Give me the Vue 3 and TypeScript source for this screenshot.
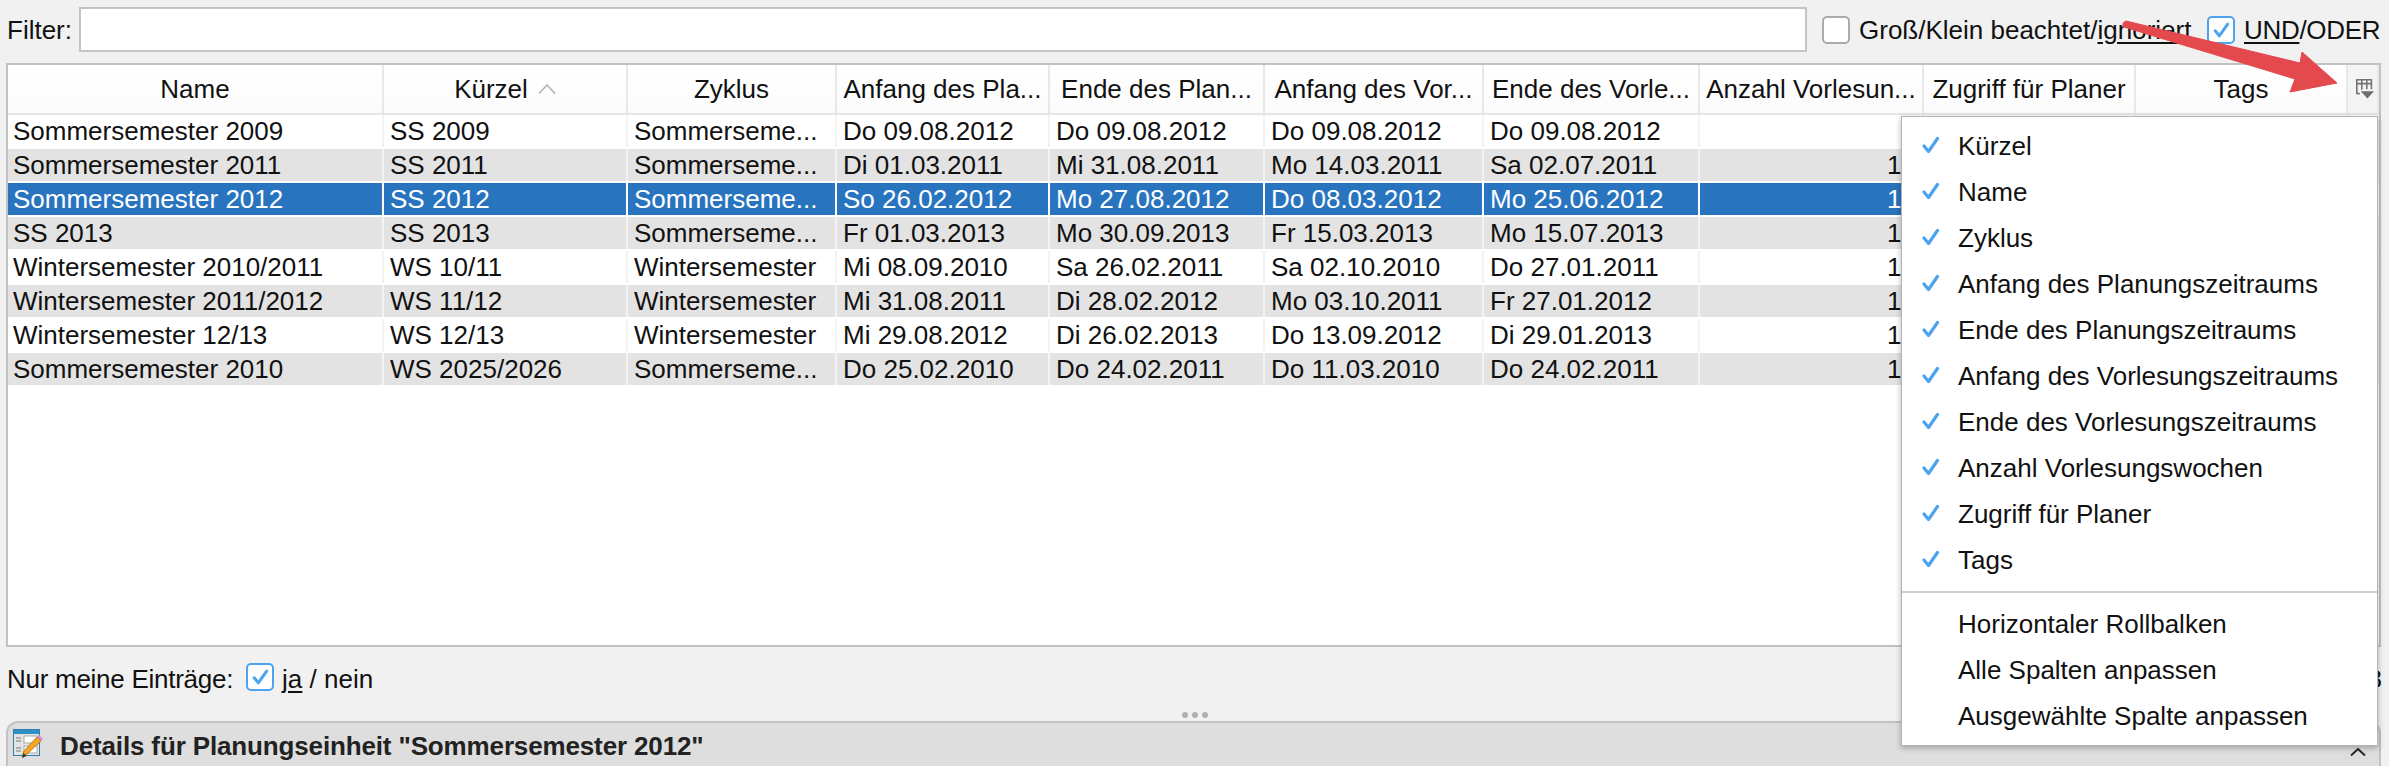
<script setup lang="ts">
interface Row { name: string; short: string; cycle: string; a: string; b: string; c: string; d: string; weeks: string }

const headers: string[] = ['Name', 'Kürzel', 'Zyklus', 'Anfang des Pla...', 'Ende des Plan...', 'Anfang des Vor...', 'Ende des Vorle...', 'Anzahl Vorlesun...', 'Zugriff für Planer', 'Tags']

const rows: Row[] = [
  { name: 'Sommersemester 2009', short: 'SS 2009', cycle: 'Sommerseme...', a: 'Do 09.08.2012', b: 'Do 09.08.2012', c: 'Do 09.08.2012', d: 'Do 09.08.2012', weeks: '' },
  { name: 'Sommersemester 2011', short: 'SS 2011', cycle: 'Sommerseme...', a: 'Di 01.03.2011', b: 'Mi 31.08.2011', c: 'Mo 14.03.2011', d: 'Sa 02.07.2011', weeks: '15' },
  { name: 'Sommersemester 2012', short: 'SS 2012', cycle: 'Sommerseme...', a: 'So 26.02.2012', b: 'Mo 27.08.2012', c: 'Do 08.03.2012', d: 'Mo 25.06.2012', weeks: '15' },
  { name: 'SS 2013', short: 'SS 2013', cycle: 'Sommerseme...', a: 'Fr 01.03.2013', b: 'Mo 30.09.2013', c: 'Fr 15.03.2013', d: 'Mo 15.07.2013', weeks: '15' },
  { name: 'Wintersemester 2010/2011', short: 'WS 10/11', cycle: 'Wintersemester', a: 'Mi 08.09.2010', b: 'Sa 26.02.2011', c: 'Sa 02.10.2010', d: 'Do 27.01.2011', weeks: '15' },
  { name: 'Wintersemester 2011/2012', short: 'WS 11/12', cycle: 'Wintersemester', a: 'Mi 31.08.2011', b: 'Di 28.02.2012', c: 'Mo 03.10.2011', d: 'Fr 27.01.2012', weeks: '15' },
  { name: 'Wintersemester 12/13', short: 'WS 12/13', cycle: 'Wintersemester', a: 'Mi 29.08.2012', b: 'Di 26.02.2013', c: 'Do 13.09.2012', d: 'Di 29.01.2013', weeks: '15' },
  { name: 'Sommersemester 2010', short: 'WS 2025/2026', cycle: 'Sommerseme...', a: 'Do 25.02.2010', b: 'Do 24.02.2011', c: 'Do 11.03.2010', d: 'Do 24.02.2011', weeks: '15' },
]

const columns: string[] = ['Kürzel', 'Name', 'Zyklus', 'Anfang des Planungszeitraums', 'Ende des Planungszeitraums', 'Anfang des Vorlesungszeitraums', 'Ende des Vorlesungszeitraums', 'Anzahl Vorlesungswochen', 'Zugriff für Planer', 'Tags']
const actions: string[] = ['Horizontaler Rollbalken', 'Alle Spalten anpassen', 'Ausgewählte Spalte anpassen']

function rowClass(i: number): string {
  if (i === 2) return 'row selected'
  return i % 2 === 1 ? 'row alt' : 'row'
}
</script>

<template>
  <div class="page">
    <div class="filter-bar">
      <span class="filter-label">Filter:</span>
      <div class="filter-input"></div>
      <div class="box"></div>
      <span class="opt-a">Groß/Klein beachtet/<u>ignoriert</u></span>
      <div class="box on">
        <svg viewBox="0 0 24 24" width="20" height="20"><path d="M5 13l5 6L20 5" fill="none" stroke="#4da3ee" stroke-width="3.6" stroke-linecap="round" stroke-linejoin="round" /></svg>
      </div>
      <span class="opt-b"><u>UND</u>/ODER</span>
    </div>

    <div class="frame">
      <div class="grid head">
        <div v-for="h in headers" :key="h" class="hcell">
          <span>{{ h }}</span>
          <svg v-if="h === 'Kürzel'" class="sort" viewBox="0 0 18 10" width="18" height="10"><path d="M1 9.5L9 1l8 8.5" fill="none" stroke="#b4b4b4" stroke-width="1.6" /></svg>
        </div>
        <div class="hcell corner">
          <svg viewBox="0 0 18 20" width="18" height="20">
            <path d="M0.8 15V0.8h14.6v9.5M0.8 4.6h14.6M5.8 0.8v10M10.8 0.8v9.5M0.8 14.6h3" fill="none" stroke="#747474" stroke-width="1.6" />
            <path d="M4.7 12.2H18l-6.6 7.4z" fill="#6e6e6e" />
          </svg>
        </div>
      </div>
      <div class="body">
        <div v-for="(r, i) in rows" :key="r.name" class="grid" :class="rowClass(i)">
          <div class="cell first">{{ r.name }}</div>
          <div class="cell">{{ r.short }}</div>
          <div class="cell">{{ r.cycle }}</div>
          <div class="cell">{{ r.a }}</div>
          <div class="cell">{{ r.b }}</div>
          <div class="cell">{{ r.c }}</div>
          <div class="cell">{{ r.d }}</div>
          <div class="cell num">{{ r.weeks }}</div>
          <div class="cell"></div>
          <div class="cell"></div>
          <div class="cell"></div>
        </div>
      </div>
    </div>

    <div class="mine">
      <span class="mine-label">Nur meine Einträge:</span>
      <div class="box on">
        <svg viewBox="0 0 24 24" width="20" height="20"><path d="M5 13l5 6L20 5" fill="none" stroke="#4da3ee" stroke-width="3.6" stroke-linecap="round" stroke-linejoin="round" /></svg>
      </div>
      <span class="yes"><u>ja</u> / nein</span>
      <span class="count">8</span>
    </div>

    <div class="grip"><i></i><i></i><i></i></div>

    <div class="panel">
      <svg class="panel-icon" viewBox="0 0 30 30" width="30" height="30">
        <rect x="0.5" y="0.5" width="26" height="26" fill="#e4e4e4" stroke="#2f7fb2" />
        <rect x="1" y="1" width="25" height="4" fill="#2f8fc6" />
        <rect x="11" y="7" width="13" height="7" fill="#fff" stroke="#a8a8a8" />
        <rect x="11" y="17" width="13" height="7" fill="#fff" stroke="#a8a8a8" />
        <path d="M3 9h5M3 12h5M3 19h5M3 22h5" stroke="#777" stroke-width="1.2" />
        <path d="M9 28l2-6L24 8l4 4-14 13z" fill="#f5a623" stroke="#a86a10" stroke-width="0.8" />
        <path d="M24 8l2-2 4 4-2 2z" fill="#d88ac8" />
        <path d="M9 29l1.5-5 3 3z" fill="#333" />
      </svg>
      <span class="panel-title">Details für Planungseinheit "Sommersemester 2012"</span>
      <svg class="panel-chevron" viewBox="0 0 16 10" width="16" height="10"><path d="M1 8.5L8 2l7 6.5" fill="none" stroke="#222" stroke-width="1.8" /></svg>
    </div>

    <div class="menu">
      <div v-for="c in columns" :key="c" class="item">
        <svg class="check" viewBox="0 0 18 18" width="18" height="18"><path d="M2 10l4.5 5.5L15.5 2.5" fill="none" stroke="#4da3ee" stroke-width="3.2" stroke-linecap="round" stroke-linejoin="round" /></svg>
        <span>{{ c }}</span>
      </div>
      <div class="sep"></div>
      <div v-for="a in actions" :key="a" class="item"><span>{{ a }}</span></div>
    </div>

    <svg class="arrow" viewBox="0 0 2389 766" width="2389" height="766">
      <path d="M2126 21L2300 63L2302 52L2337 83L2290 92L2295 79L2124 27Q2121 23 2126 21Z" fill="#e4494e" stroke="#e4494e" stroke-width="1" stroke-linejoin="round" />
    </svg>
  </div>
</template>

<style>
html, body { margin: 0; background: #f1f1f1; }
</style>

<style scoped>
.page {
  position: relative;
  width: 2389px;
  height: 766px;
  overflow: hidden;
  background: #f1f1f1;
  color: #111;
  font-family: "Liberation Sans", Arial, sans-serif;
  font-size: 26px;
  display: flex;
  flex-direction: column;
}
u { text-underline-offset: 3px; text-decoration-thickness: 2px; }
.filter-bar {
  display: flex;
  align-items: center;
  height: 45px;
  margin-top: 7px;
  padding-left: 7px;
}
.filter-label { width: 72px; flex: none; padding-top: 2px; }
.filter-input {
  width: 1728px;
  height: 45px;
  box-sizing: border-box;
  flex: none;
  background: #fff;
  border: 2px solid #c4c4c4;
}
.box {
  flex: none;
  box-sizing: border-box;
  width: 28px;
  height: 28px;
  background: #fff;
  border: 2px solid #ababab;
  border-radius: 5px;
  display: flex;
  align-items: center;
  justify-content: center;
}
.box.on { border-color: #4da3ee; }
.filter-bar > .box { margin-left: 15px; }
.filter-bar > .box.on { margin-left: 17px; }
.opt-a { margin-left: 9px; white-space: nowrap; width: 331px; flex: none; padding-top: 2px; }
.opt-b { margin-left: 9px; white-space: nowrap; padding-top: 2px; letter-spacing: -0.3px; }

.frame {
  margin: 11px 0 0 6px;
  width: 2375px;
  height: 584px;
  flex: none;
  box-sizing: border-box;
  border: 2px solid #c2c2c2;
  background: #fff;
}
.grid {
  display: grid;
  grid-template-columns: 374px 242px 207px 211px 213px 217px 214px 222px 210px 210px 29px;
  column-gap: 2px;
}
.head {
  height: 48px;
  background: #e8e8e8;
  border-bottom: 2px solid #e6e6e6;
}
.hcell {
  display: flex;
  align-items: center;
  justify-content: center;
  gap: 10px;
  white-space: nowrap;
  overflow: hidden;
  background: linear-gradient(#fff, #fbfbfb);
}
.corner { background: #f4f4f4; }
.corner svg { margin-left: 5px; flex: none; }
.sort { flex: none; }
.body { display: flex; flex-direction: column; gap: 2px; }
.row { height: 32px; background: #f3f3f3; }
.cell {
  padding-left: 6px;
  line-height: 32px;
  white-space: nowrap;
  overflow: hidden;
  background: #fff;
}
.cell.first { padding-left: 5px; }
.cell.num { padding-left: 0; padding-right: 6px; text-align: right; }
.alt .cell { background: #e3e3e3; }
.selected { background: #fff; }
.selected .cell { background: #2874bf; color: #fff; }

.mine {
  height: 62px;
  flex: none;
  display: flex;
  align-items: center;
  padding-left: 7px;
  width: 2375px;
  box-sizing: content-box;
}
.mine-label { padding-top: 2px; letter-spacing: -0.27px; }
.mine .box { margin-left: 13px; margin-top: -2px; }
.yes { margin-left: 8px; padding-top: 2px; }
.count { margin-left: auto; padding-top: 2px; }

.grip {
  height: 12px;
  flex: none;
  display: flex;
  align-items: center;
  justify-content: center;
  gap: 4px;
}
.grip i { width: 6px; height: 6px; border-radius: 50%; background: #b0b0b0; }

.panel {
  margin-left: 6px;
  width: 2375px;
  flex: 1;
  box-sizing: border-box;
  border: 2px solid #c2c2c2;
  border-bottom: 0;
  border-radius: 12px 12px 0 0;
  background: #dedede;
  display: flex;
  align-items: flex-start;
  padding-left: 5px;
}
.panel-icon { margin-top: 6px; flex: none; }
.panel-title {
  margin-left: 17px;
  font-weight: 700;
  color: #222;
  line-height: 40px;
  margin-top: 3px;
  white-space: nowrap;
  letter-spacing: -0.14px;
}
.panel-chevron { margin-left: auto; margin-right: 13px; margin-top: 24px; }

.menu {
  position: absolute;
  left: 1901px;
  top: 116px;
  width: 477px;
  box-sizing: border-box;
  padding: 6px 0;
  background: #fff;
  border: 1px solid #b4b4b4;
  box-shadow: 0 2px 6px rgba(0, 0, 0, 0.28);
  z-index: 2;
}
.item {
  position: relative;
  height: 46px;
  line-height: 46px;
  padding-left: 56px;
  white-space: nowrap;
}
.check { position: absolute; left: 20px; top: 13px; }
.sep { height: 2px; background: #cfcfcf; margin: 8px 0 8px; }

.arrow { position: absolute; left: 0; top: 0; z-index: 3; pointer-events: none; }
</style>
